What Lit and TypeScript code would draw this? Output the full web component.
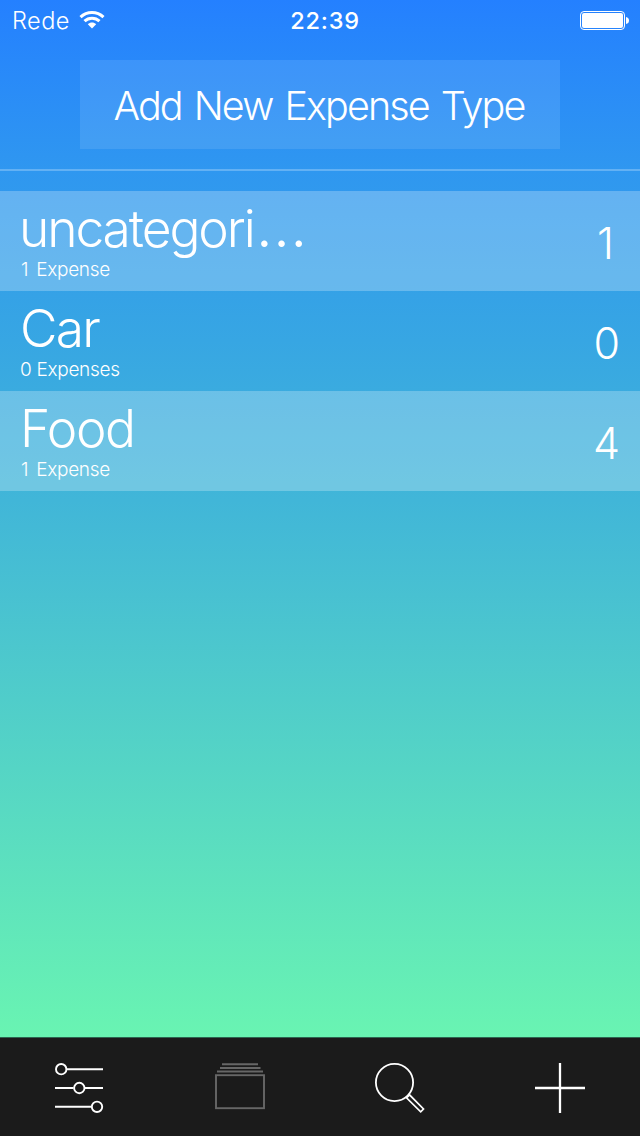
import { LitElement, html, css, nothing } from "lit";
import { customElement } from "lit/decorators.js";

interface ExpenseType {
  name: string;
  kind: string;
  clipped: boolean;
  detail: string;
  count: number;
}

const TYPES: ExpenseType[] = [
  { name: "uncategori", kind: "long", clipped: true, detail: "1 Expense", count: 1 },
  { name: "Car", kind: "car", clipped: false, detail: "0 Expenses", count: 0 },
  { name: "Food", kind: "food", clipped: false, detail: "1 Expense", count: 4 },
];

@customElement("app-root")
export class AppRoot extends LitElement {
  static styles = css`
    :host {
      display: flex;
      flex-direction: column;
      width: 640px;
      height: 1136px;
      overflow: hidden;
      color: #fff;
      font-family: Inter, "Liberation Sans", sans-serif;
      font-weight: 300;
      background: linear-gradient(#2480ff 0, #2f97f0 170px, #37a6e3 340px, #41b6d8 500px, #69f4b2 1037px);
    }
    svg { display: block; }
    .status {
      display: grid;
      grid-template-columns: 1fr auto 1fr;
      align-items: center;
      height: 40px;
      box-sizing: border-box;
      padding: 2px 11px 0 12px;
      font-size: 23.5px;
      line-height: 38px;
    }
    .carrier { display: flex; align-items: center; gap: 9px; letter-spacing: 0.5px; }
    .carrier svg { margin-top: -2px; }
    .time { font-weight: 500; letter-spacing: 0.8px; padding-left: 9px; }
    .battery { justify-self: end; }
    .add {
      align-self: center;
      margin-top: 20px;
      width: 480px;
      height: 89px;
      line-height: 92px;
      text-align: center;
      font-size: 39.5px;
      letter-spacing: -1.9px;
      word-spacing: 2.8px;
      text-indent: -2px;
      background: rgba(255, 255, 255, 0.1);
      white-space: nowrap;
    }
    .rule { height: 2px; margin: 20px 0; background: rgba(255, 255, 255, 0.25); }
    .row {
      display: flex;
      justify-content: space-between;
      height: 100px;
      box-sizing: border-box;
      padding: 0 20px;
    }
    .row.shade { background: rgba(255, 255, 255, 0.25); }
    .name { box-sizing: border-box; font-size: 51.5px; line-height: 62px; padding-top: 6px; height: 68px; white-space: nowrap; }
    .long { letter-spacing: -2.1px; margin-left: -1px; }
    .dots { font-size: 61px; line-height: 0; letter-spacing: 0; margin-left: 2px; }
    .car { letter-spacing: -1.8px; }
    .food { letter-spacing: -1.4px; }
    .detail { font-size: 19px; line-height: 22px; letter-spacing: -0.3px; }
    .one .detail { padding-left: 1px; word-spacing: 3px; }
    .count { font-size: 43px; line-height: 104px; }
    .count.narrow { padding-right: 6px; }
    .spacer { flex: 1; }
    .tabs {
      display: grid;
      grid-template-columns: repeat(4, 1fr);
      height: 99px;
      background: #1b1b1b;
      box-shadow: inset 0 1px #2c6650;
    }
  `;

  render() {
    return html`
      <div class="status">
        <div class="carrier">
          <span>Rede</span>
          <svg width="26" height="20" viewBox="0 0 26 20" fill="none" stroke="#fff" stroke-width="3">
            <path d="M1.500 7.200C8 1 18 1 24.500 7.200" />
            <path d="M5.500 11.200C9.600 7.300 16.400 7.300 20.500 11.200" />
            <path d="M8.800 14.300C11.200 12 14.800 12 17.200 14.300L13 18.500Z" fill="#fff" stroke="none" />
          </svg>
        </div>
        <div class="time">22:39</div>
        <svg class="battery" width="49" height="20" viewBox="0 0 49 20">
          <rect x="0.500" y="0.500" width="44" height="18" rx="3.500" fill="none" stroke="#fff" />
          <rect x="2" y="2" width="41" height="15" rx="2" fill="#fff" />
          <path d="M46 6Q49 6.500 49 9.500T46 13Z" fill="#fff" />
        </svg>
      </div>
      <div class="add">Add New Expense Type</div>
      <div class="rule"></div>
      ${TYPES.map(
        (t, i) => html`
          <div class="row ${i % 2 === 0 ? "shade" : ""}">
            <div class="${t.detail.startsWith("1") ? "one" : ""}">
              <div class="name ${t.kind}">${t.name}${t.clipped ? html`<span class="dots">…</span>` : nothing}</div>
              <div class="detail">${t.detail}</div>
            </div>
            <div class="count ${t.count === 1 ? "narrow" : ""}">${t.count}</div>
          </div>
        `
      )}
      <div class="spacer"></div>
      <div class="tabs">
        <svg width="160" height="99" viewBox="0 0 160 99" fill="none" stroke="#fff" stroke-width="1.900">
          <path d="M67 32.200H103M55 51H73.500M85 51H103M55 69.800H91" />
          <circle cx="61.200" cy="32.200" r="5.200" />
          <circle cx="79.300" cy="51" r="5.200" />
          <circle cx="97" cy="69.800" r="5.200" />
        </svg>
        <svg width="160" height="99" viewBox="0 0 160 99" fill="none" stroke="#676767" stroke-width="1.900">
          <path d="M62 27.200H98M60 31H100.500M57 34.500H103" />
          <rect x="56" y="38.200" width="48" height="33" />
        </svg>
        <svg width="160" height="99" viewBox="0 0 160 99" fill="none" stroke="#fff" stroke-width="1.800">
          <circle cx="74.500" cy="45.500" r="18.600" />
          <path d="M86.500 60.800L89.500 57.800L103.500 72L100.700 74.800Z" stroke-width="1.700" />
        </svg>
        <svg width="160" height="99" viewBox="0 0 160 99" stroke="#fff" stroke-width="2.300">
          <path d="M80 26V76M55 51H105" />
        </svg>
      </div>
    `;
  }
}
